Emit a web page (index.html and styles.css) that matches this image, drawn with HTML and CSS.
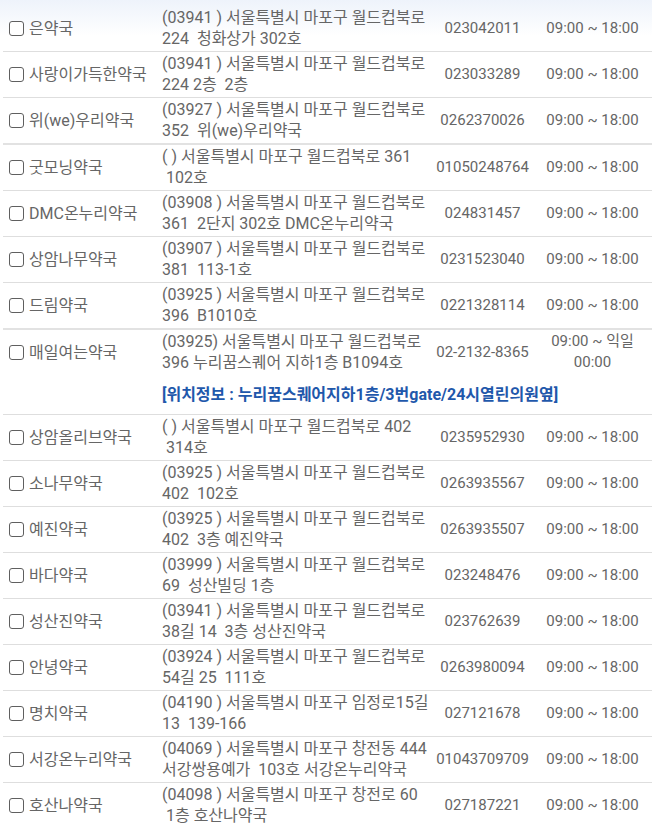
FILE: index.html
```html
<!DOCTYPE html>
<html lang="ko">
<head>
<meta charset="utf-8">
<title>약국 목록</title>
<link rel="stylesheet" href="styles.css">
</head>
<body>
<table class="list">
  <colgroup>
    <col class="c-name"><col class="c-addr"><col class="c-tel"><col class="c-time">
  </colgroup>
  <tbody>
    <tr><td class="name"><label><input type="checkbox">은약국</label></td><td class="addr">(03941 ) 서울특별시 마포구 월드컵북로<br>224&nbsp; 청화상가 302호</td><td class="tel">023042011</td><td class="time">09:00 ~ 18:00</td></tr>
    <tr><td class="name"><label><input type="checkbox">사랑이가득한약국</label></td><td class="addr">(03941 ) 서울특별시 마포구 월드컵북로<br>224 2층&nbsp; 2층</td><td class="tel">023033289</td><td class="time">09:00 ~ 18:00</td></tr>
    <tr class="thick"><td class="name"><label><input type="checkbox">위(we)우리약국</label></td><td class="addr">(03927 ) 서울특별시 마포구 월드컵북로<br>352&nbsp; 위(we)우리약국</td><td class="tel">0262370026</td><td class="time">09:00 ~ 18:00</td></tr>
    <tr><td class="name"><label><input type="checkbox">굿모닝약국</label></td><td class="addr">( ) 서울특별시 마포구 월드컵북로 361<br>&nbsp;102호</td><td class="tel">01050248764</td><td class="time">09:00 ~ 18:00</td></tr>
    <tr><td class="name"><label><input type="checkbox">DMC온누리약국</label></td><td class="addr">(03908 ) 서울특별시 마포구 월드컵북로<br>361&nbsp; 2단지 302호 DMC온누리약국</td><td class="tel">024831457</td><td class="time">09:00 ~ 18:00</td></tr>
    <tr><td class="name"><label><input type="checkbox">상암나무약국</label></td><td class="addr">(03907 ) 서울특별시 마포구 월드컵북로<br>381&nbsp; 113-1호</td><td class="tel">0231523040</td><td class="time">09:00 ~ 18:00</td></tr>
    <tr class="thick"><td class="name"><label><input type="checkbox">드림약국</label></td><td class="addr">(03925 ) 서울특별시 마포구 월드컵북로<br>396&nbsp; B1010호</td><td class="tel">0221328114</td><td class="time">09:00 ~ 18:00</td></tr>
    <tr class="joined"><td class="name"><label><input type="checkbox">매일여는약국</label></td><td class="addr">(03925) 서울특별시 마포구 월드컵북로<br>396 누리꿈스퀘어 지하1층 B1094호</td><td class="tel">02-2132-8365</td><td class="time">09:00 ~ 익일<br>00:00</td></tr>
    <tr class="note-row"><td></td><td class="note" colspan="3">[위치정보 : 누리꿈스퀘어지하1층/3번gate/24시열린의원옆]</td></tr>
    <tr><td class="name"><label><input type="checkbox">상암올리브약국</label></td><td class="addr">( ) 서울특별시 마포구 월드컵북로 402<br>&nbsp;314호</td><td class="tel">0235952930</td><td class="time">09:00 ~ 18:00</td></tr>
    <tr><td class="name"><label><input type="checkbox">소나무약국</label></td><td class="addr">(03925 ) 서울특별시 마포구 월드컵북로<br>402&nbsp; 102호</td><td class="tel">0263935567</td><td class="time">09:00 ~ 18:00</td></tr>
    <tr><td class="name"><label><input type="checkbox">예진약국</label></td><td class="addr">(03925 ) 서울특별시 마포구 월드컵북로<br>402&nbsp; 3층 예진약국</td><td class="tel">0263935507</td><td class="time">09:00 ~ 18:00</td></tr>
    <tr><td class="name"><label><input type="checkbox">바다약국</label></td><td class="addr">(03999 ) 서울특별시 마포구 월드컵북로<br>69&nbsp; 성산빌딩 1층</td><td class="tel">023248476</td><td class="time">09:00 ~ 18:00</td></tr>
    <tr><td class="name"><label><input type="checkbox">성산진약국</label></td><td class="addr">(03941 ) 서울특별시 마포구 월드컵북로<br>38길 14&nbsp; 3층 성산진약국</td><td class="tel">023762639</td><td class="time">09:00 ~ 18:00</td></tr>
    <tr><td class="name"><label><input type="checkbox">안녕약국</label></td><td class="addr">(03924 ) 서울특별시 마포구 월드컵북로<br>54길 25&nbsp; 111호</td><td class="tel">0263980094</td><td class="time">09:00 ~ 18:00</td></tr>
    <tr><td class="name"><label><input type="checkbox">명치약국</label></td><td class="addr">(04190 ) 서울특별시 마포구 임정로15길<br>13&nbsp; 139-166</td><td class="tel">027121678</td><td class="time">09:00 ~ 18:00</td></tr>
    <tr><td class="name"><label><input type="checkbox">서강온누리약국</label></td><td class="addr">(04069 ) 서울특별시 마포구 창전동 444<br>서강쌍용예가&nbsp; 103호 서강온누리약국</td><td class="tel">01043709709</td><td class="time">09:00 ~ 18:00</td></tr>
    <tr><td class="name"><label><input type="checkbox">호산나약국</label></td><td class="addr">(04098 ) 서울특별시 마포구 창전로 60<br>&nbsp;1층 호산나약국</td><td class="tel">027187221</td><td class="time">09:00 ~ 18:00</td></tr>
  </tbody>
</table>
</body>
</html>
```
FILE: styles.css
```css
html, body {
  margin: 0;
  padding: 0;
}
body {
  background: linear-gradient(#eef3fb, #ffffff 36px) no-repeat #fff;
  font-family: Roboto, "Noto Sans CJK KR", sans-serif;
  font-size: 16px;
  line-height: 21px;
  color: #666;
  padding: 6px 0 0 3px;
}
.list {
  width: 649px;
  border-collapse: collapse;
  table-layout: fixed;
}
.c-name { width: 152px; }
.c-addr { width: 277px; }
.c-tel { width: 101px; }
.c-time { width: 119px; }
.list td {
  padding: 1px 0 2px;
  border-bottom: 1px solid #dedede;
  vertical-align: middle;
  white-space: nowrap;
  overflow: hidden;
}
.list tr.thick td {
  border-bottom: 2px solid #e2e2e2;
}
.list tr.joined td {
  border-bottom: none;
}
.name {
  padding-left: 6px !important;
}
.name label {
  display: flex;
  align-items: center;
}
.name input {
  appearance: none;
  -webkit-appearance: none;
  box-sizing: border-box;
  width: 15px;
  height: 15px;
  margin: 0 5px 0 0;
  border: 1.5px solid #5f5f5f;
  border-radius: 3px;
  background: #fff;
  flex: none;
}
.addr {
  padding-left: 7px !important;
}
.tel, .time {
  text-align: center;
  font-size: 15px;
}
.note-row td {
  padding: 9px 0 9px;
}
.note {
  padding-left: 7px !important;
  color: #1f58ab;
  font-weight: bold;
}
```
